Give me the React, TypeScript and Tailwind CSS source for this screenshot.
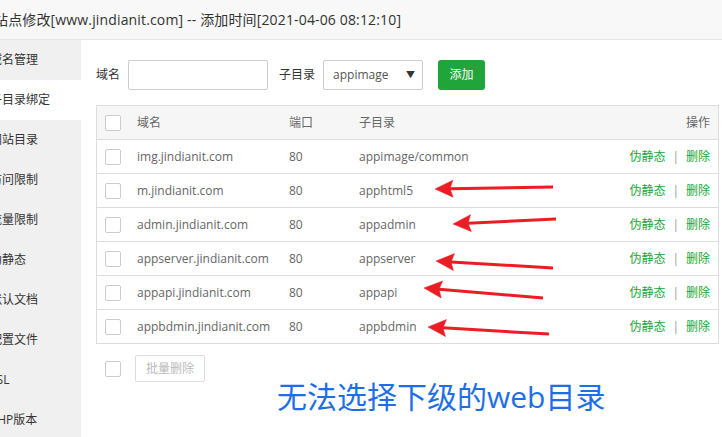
import { X } from 'lucide-react'

const menu = ['域名管理', '子目录绑定', '网站目录', '访问限制', '流量限制', '伪静态', '默认文档', '配置文件', 'SSL', 'PHP版本']

const rows = [
  { domain: 'img.jindianit.com', port: '80', path: 'appimage/common' },
  { domain: 'm.jindianit.com', port: '80', path: 'apphtml5' },
  { domain: 'admin.jindianit.com', port: '80', path: 'appadmin' },
  { domain: 'appserver.jindianit.com', port: '80', path: 'appserver' },
  { domain: 'appapi.jindianit.com', port: '80', path: 'appapi' },
  { domain: 'appbdmin.jindianit.com', port: '80', path: 'appbdmin' },
]

// red annotation arrows: [tipX, tipY, tailX, tailY]
const arrows = [
  [435, 189, 553, 187],
  [453, 224, 556, 219],
  [436, 261, 553, 268],
  [424, 288, 543, 298],
  [428, 327, 549, 334],
]

function Checkbox() {
  return <span className="block h-4 w-4 shrink-0 rounded-[2px] border border-[#cccccc] bg-white" />
}

function Arrow({ tip }: { tip: number[] }) {
  const [x1, y1, x2, y2] = tip
  const len = Math.hypot(x2 - x1, y2 - y1)
  const ux = (x2 - x1) / len
  const uy = (y2 - y1) / len
  const head = 18
  const half = 8.5
  const bx = x1 + ux * head
  const by = y1 + uy * head
  const nx = x1 + ux * (head - 3)
  const ny = y1 + uy * (head - 3)
  const pts = `${x1},${y1} ${bx - uy * half},${by + ux * half} ${nx},${ny} ${bx + uy * half},${by - ux * half}`
  return (
    <g fill="#ec1c24" stroke="#ec1c24">
      <line x1={nx} y1={ny} x2={x2} y2={y2} strokeWidth={3} />
      <polygon points={pts} strokeWidth={0.5} strokeLinejoin="round" />
    </g>
  )
}

export default function App() {
  return (
    <div className="relative h-[437px] w-[722px] overflow-hidden bg-white font-['Open_Sans','Noto_Sans_CJK_SC',sans-serif] text-[12px] text-[#666666]">
      <div className="flex h-[40px] items-center overflow-hidden border-b border-[#e5e5e5] bg-[#f8f8f8]">
        <span className="-ml-[6px] whitespace-nowrap text-[14px] tracking-[0.15px] text-[#333333]">
          站点修改[www.jindianit.com] -- 添加时间[2021-04-06 08:12:10]
        </span>
      </div>
      <X className="absolute left-[720px] top-[12px] h-[14px] w-[14px] text-[#999999]" strokeWidth={1.5} />

      <div className="flex">
        <div className="flex w-[81px] shrink-0 flex-col overflow-hidden bg-[#f0f0f0]">
          {menu.map((item, i) => (
            <div
              key={item}
              className={`flex h-[40px] items-center whitespace-nowrap text-[#333333] ${i === 1 ? 'bg-white' : ''}`}
            >
              <span className="-ml-[10px]">{item}</span>
            </div>
          ))}
        </div>

        <div className="flex-1 pl-[15px] pr-[3px] pt-[20px]">
          <div className="flex h-[30px] items-center text-[#333333]">
            <span className="mr-[8px]">域名</span>
            <span className="block h-[30px] w-[140px] rounded-[2px] border border-[#cccccc]" />
            <span className="ml-[11px] mr-[8px]">子目录</span>
            <div className="flex h-[30px] w-[100px] items-center justify-between rounded-[2px] border border-[#cccccc] pl-[9px] pr-[7px] text-[#555555]">
              <span>appimage</span>
              <span className="text-[9px] text-[#333333]">▼</span>
            </div>
            <button className="ml-[15px] h-[30px] w-[47px] rounded-[3px] bg-[#20a53a] text-white">添加</button>
          </div>

          <div className="mt-[15px] border border-[#dddddd]">
            <div className="flex h-[33px] items-center bg-[#f6f6f6] pr-[8px]">
              <div className="w-[40px] pl-[8px]">
                <Checkbox />
              </div>
              <div className="w-[152px]">域名</div>
              <div className="w-[70px]">端口</div>
              <div className="flex-1">子目录</div>
              <div>操作</div>
            </div>
            {rows.map((r) => (
              <div key={r.domain} className="flex h-[34px] items-center border-t border-[#dddddd] pr-[8px]">
                <div className="w-[40px] pl-[8px]">
                  <Checkbox />
                </div>
                <div className="w-[152px]">{r.domain}</div>
                <div className="w-[70px]">{r.port}</div>
                <div className="flex-1">{r.path}</div>
                <div className="flex items-center text-[#20a53a]">
                  <span>伪静态</span>
                  <span className="mx-[7px] text-[#999999]">|</span>
                  <span>删除</span>
                </div>
              </div>
            ))}
          </div>

          <div className="mt-[11px] flex h-[27px] items-center pl-[9px]">
            <Checkbox />
            <button className="ml-[14px] h-[27px] w-[70px] rounded-[2px] border border-[#dddddd] bg-white text-[#bbbbbb]">
              批量删除
            </button>
          </div>
        </div>
      </div>

      <div className="absolute left-[277px] top-[382px] whitespace-nowrap text-[30px] leading-none text-[#1e6fe6]">
        无法选择下级的web目录
      </div>

      <svg className="pointer-events-none absolute inset-0" width={722} height={437}>
        {arrows.map((a, i) => (
          <Arrow key={i} tip={a} />
        ))}
      </svg>
    </div>
  )
}
